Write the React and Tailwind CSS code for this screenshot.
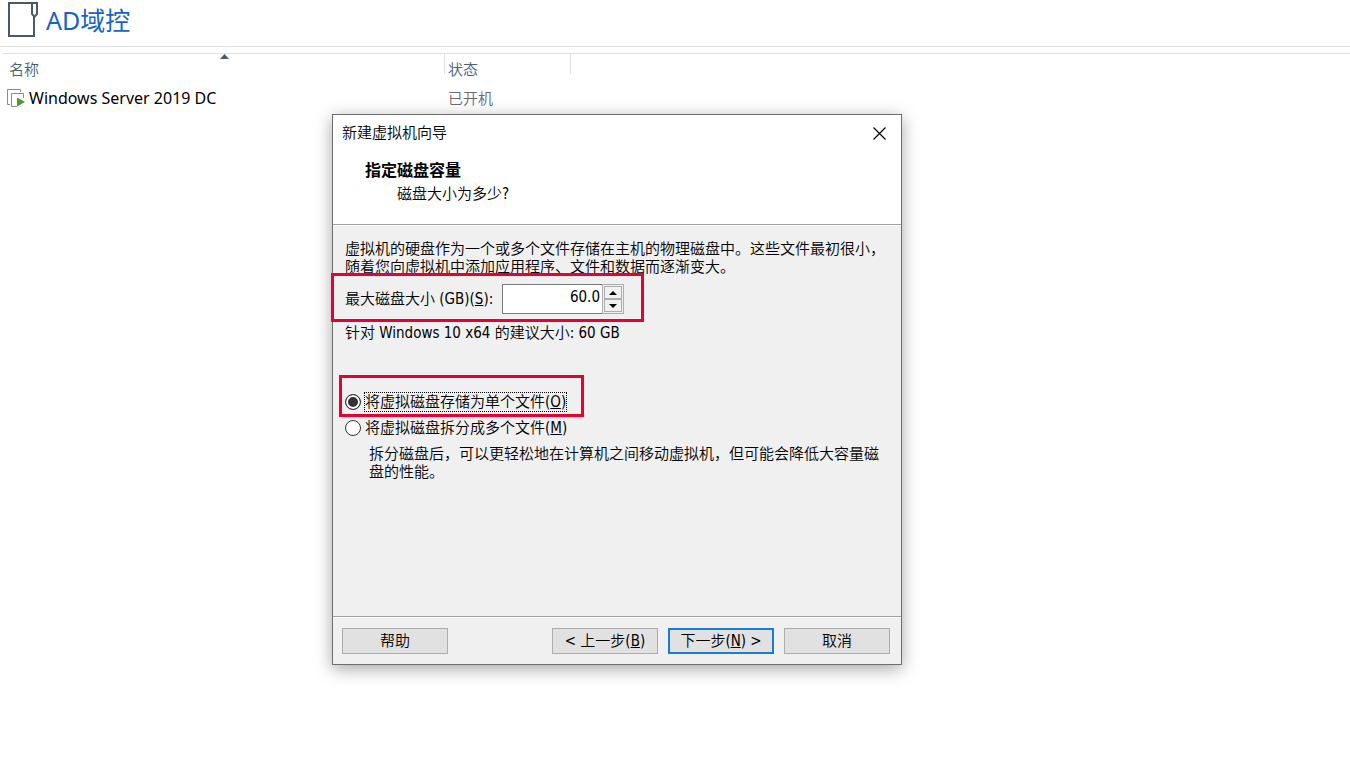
import { useState } from "react";

const machines = [{ name: "Windows Server 2019 DC", status: "已开机" }];

function FolderIcon() {
  return (
    <svg width="31" height="38" viewBox="0 0 31 38" fill="none" stroke="#485a66" strokeWidth="2" aria-hidden="true">
      <path d="M25 3H2v33h25V17" />
      <path d="M24 3h7" />
      <path d="M25 3v11l2.500 3L30 14V3" />
    </svg>
  );
}

function MachineIcon() {
  return (
    <svg width="18" height="18" viewBox="0 0 18 18" fill="none" aria-hidden="true">
      <path d="M3 15.500H.5V.5h13V3" stroke="#8a8a8a" />
      <path d="M10 17.500H4.500v-13h12V9" stroke="#8a8a8a" />
      <path d="M10 8.500v9l8-4.500z" fill="#4e9a2e" />
    </svg>
  );
}

function Library() {
  return (
    <main>
      <header className="flex h-[47px] items-start gap-2 border-b border-[#e0e0e0] pl-[7px]">
        <FolderIcon />
        <h1 className="text-[25px] leading-10 font-normal text-[#1763bf]">AD域控</h1>
      </header>
      <div className="pt-1.5 pl-[3px]">
        <table className="w-full table-fixed border-t border-[#e0e0e0] text-left">
          <colgroup>
            <col className="w-[441px]" />
            <col className="w-[127px]" />
            <col />
          </colgroup>
          <thead>
            <tr className="align-top text-[#4b6073]">
              <th className="relative h-7 p-0 pt-[5px] pl-1.5 font-[350]">
                名称
                <svg className="absolute top-0 left-[217px]" width="9" height="5" viewBox="0 0 9 5" aria-hidden="true">
                  <path d="M0 5 4.500 0 9 5z" fill="#485a66" />
                </svg>
              </th>
              <th className="h-7 p-0 font-[350]">
                <div className="h-5 border-x border-[#e0e0e0] pt-[5px] pl-[3px]">状态</div>
              </th>
              <th />
            </tr>
          </thead>
          <tbody>
            {machines.map((machine) => (
              <tr key={machine.name}>
                <td className="h-8 p-0 pl-1">
                  <a href="#machine" className="flex items-center gap-1 text-base leading-5 font-normal text-black">
                    <MachineIcon />
                    {machine.name}
                  </a>
                </td>
                <td className="p-0 pl-1 text-[#6b6b6b]">{machine.status}</td>
                <td />
              </tr>
            ))}
          </tbody>
        </table>
      </div>
    </main>
  );
}

function Highlight({ className }) {
  return <div className={`pointer-events-none absolute border-3 border-[#e60033] ${className}`} />;
}

function WizardButton({ primary, children }) {
  return (
    <button
      type="button"
      className={`h-[26px] w-[106px] bg-[#e1e1e1] ${primary ? "border-2 border-[#1a7dd4]" : "border border-[#adadad]"}`}
    >
      {children}
    </button>
  );
}

function SpinButton({ label, path, onClick }) {
  return (
    <button
      type="button"
      aria-label={label}
      onClick={onClick}
      className="flex flex-1 items-center justify-center border border-[#adadad]"
    >
      <svg width="8" height="4" viewBox="0 0 8 4" aria-hidden="true">
        <path d={path} />
      </svg>
    </button>
  );
}

function DiskSize() {
  const [size, setSize] = useState(60);

  return (
    <div className="relative mt-2 flex items-center">
      <label htmlFor="disk-size" className="w-[157px]">
        最大磁盘大小 (GB)(<u>S</u>):
      </label>
      <div className="flex h-[30px] w-[122px]">
        <input
          id="disk-size"
          value={size.toFixed(1)}
          onChange={(e) => setSize(Number(e.target.value) || 0)}
          className="min-w-0 flex-1 border border-r-0 border-[#7a7a7a] bg-white pr-0.5 pb-1 text-right outline-none"
        />
        <div className="flex w-[22px] flex-col border border-[#adadad] p-px">
          <SpinButton label="增加" path="M0 4 4 0l4 4z" onClick={() => setSize(size + 1)} />
          <SpinButton label="减少" path="M0 0l4 4 4-4z" onClick={() => setSize(size - 1)} />
        </div>
      </div>
      <Highlight className="-top-[11px] -left-[14px] h-[49px] w-[313px]" />
    </div>
  );
}

function Radio({ value, hotkey, mode, setMode, children }) {
  const checked = mode === value;
  return (
    <label className="flex items-center gap-1">
      <input
        type="radio"
        name="mode"
        checked={checked}
        onChange={() => setMode(value)}
        className="size-4 appearance-none rounded-full border border-[#333] bg-white checked:bg-[#333] checked:shadow-[inset_0_0_0_2px_white]"
      />
      <span className={checked ? "outline outline-dotted outline-black" : ""}>
        {children}(<u>{hotkey}</u>)
      </span>
    </label>
  );
}

function Wizard() {
  const [mode, setMode] = useState("single");

  return (
    <section
      role="dialog"
      aria-labelledby="wizard-title"
      className="absolute top-[114px] left-[332px] w-[570px] border border-[#6e6e6e] bg-[#f0f0f0] font-['DejaVu_Sans_Condensed','Noto_Sans_CJK_SC',sans-serif] leading-[18px] text-black shadow-[0_4px_16px_rgba(0,0,0,0.35)]"
    >
      <div className="border-b border-[#a0a0a0] bg-white pb-[19px]">
        <div className="flex h-9 items-center justify-between pr-[15px] pl-[9px]">
          <h2 id="wizard-title">新建虚拟机向导</h2>
          <button type="button" aria-label="关闭">
            <svg width="13" height="13" viewBox="0 0 13 13" stroke="black" strokeWidth="1.200">
              <path d="m.5.5 12 12m0-12-12 12" />
            </svg>
          </button>
        </div>
        <h3 className="pt-2 pl-8 text-base leading-6 font-bold">指定磁盘容量</h3>
        <p className="pl-16 leading-[22px]">磁盘大小为多少?</p>
      </div>

      <div className="min-h-[391px] border-t border-white pt-3.5 pr-4 pl-3">
        <p>虚拟机的硬盘作为一个或多个文件存储在主机的物理磁盘中。这些文件最初很小，随着您向虚拟机中添加应用程序、文件和数据而逐渐变大。</p>
        <DiskSize />
        <p className="mt-2.5">针对 Windows 10 x64 的建议大小: 60 GB</p>
        <fieldset className="relative mt-[51px] flex flex-col items-start gap-2">
          <Radio value="single" hotkey="O" mode={mode} setMode={setMode}>
            将虚拟磁盘存储为单个文件
          </Radio>
          <Radio value="split" hotkey="M" mode={mode} setMode={setMode}>
            将虚拟磁盘拆分成多个文件
          </Radio>
          <Highlight className="-top-[18px] -left-1.5 h-[42px] w-[245px]" />
        </fieldset>
        <p className="mt-2 pl-6">拆分磁盘后，可以更轻松地在计算机之间移动虚拟机，但可能会降低大容量磁盘的性能。</p>
      </div>

      <div className="border-t border-[#a0a0a0]">
        <div className="flex gap-2.5 border-t border-white pt-2.5 pr-[11px] pb-2.5 pl-[9px]">
          <div className="flex-1">
            <WizardButton>帮助</WizardButton>
          </div>
          <WizardButton>
            &lt; 上一步(<u>B</u>)
          </WizardButton>
          <WizardButton primary>
            下一步(<u>N</u>) &gt;
          </WizardButton>
          <WizardButton>取消</WizardButton>
        </div>
      </div>
    </section>
  );
}

export default function App() {
  return (
    <div className="relative min-h-screen bg-white font-['Noto_Sans','Noto_Sans_CJK_SC',sans-serif] text-[15px] leading-5 font-[350]">
      <Library />
      <Wizard />
    </div>
  );
}
